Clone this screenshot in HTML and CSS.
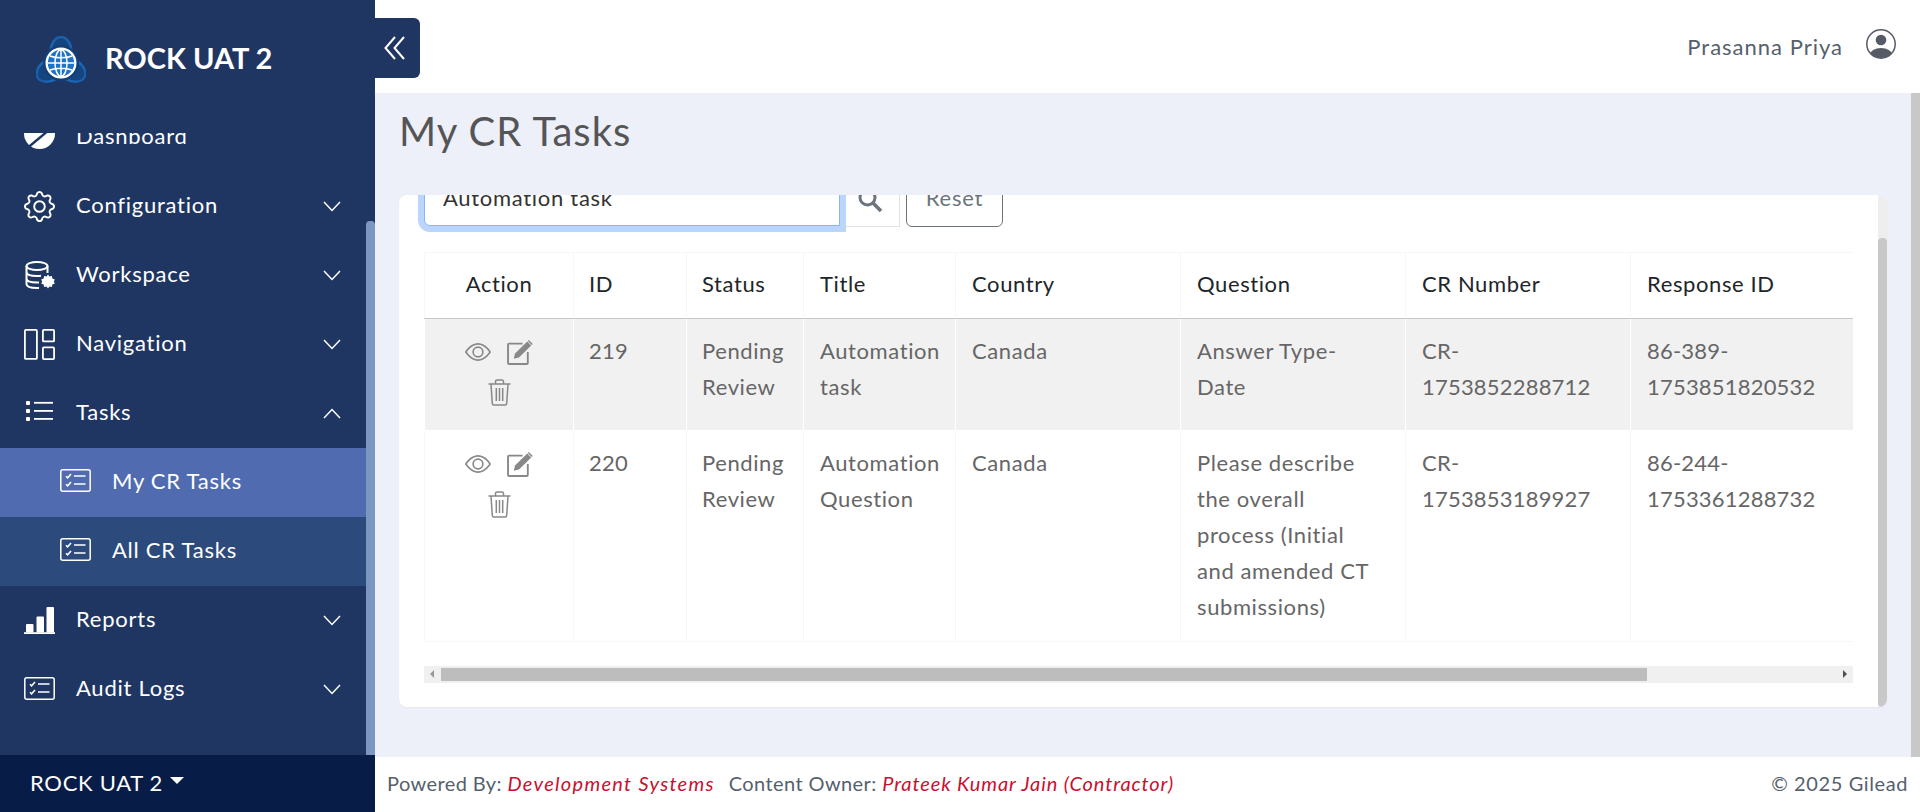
FILE: index.html
```html
<!DOCTYPE html>
<html lang="en">
<head>
<meta charset="utf-8">
<title>My CR Tasks</title>
<link rel="stylesheet" href="styles.css">
</head>
<body>
<svg class="defs" width="0" height="0" aria-hidden="true">
  <defs>
    <symbol id="i-chev-down" viewBox="0 0 18 11"><path d="M1 1l8 8.5L17 1" fill="none" stroke="currentColor" stroke-width="1.5"/></symbol>
    <symbol id="i-chev-up" viewBox="0 0 18 11"><path d="M1 10l8-8.5L17 10" fill="none" stroke="currentColor" stroke-width="1.5"/></symbol>
    <symbol id="i-tasklist" viewBox="0 0 31 23">
      <rect x=".8" y=".8" width="29.4" height="21.4" rx="2" fill="none" stroke="currentColor" stroke-width="1.5"/>
      <path d="M6 7.2l1.6 1.6L11 5M6 15.2l1.6 1.6L11 13" fill="none" stroke="currentColor" stroke-width="1.6"/>
      <path d="M14 7h11.5M14 15h11.5" fill="none" stroke="currentColor" stroke-width="1.7"/>
    </symbol>
    <symbol id="i-eye" viewBox="0 0 16 16"><path d="M16 8s-3-5.500-8-5.500S0 8 0 8s3 5.500 8 5.500S16 8 16 8zM1.173 8a13.133 13.133 0 0 1 1.660-2.043C4.120 4.668 5.880 3.500 8 3.500c2.120 0 3.879 1.168 5.168 2.457A13.133 13.133 0 0 1 14.828 8c-.058.087-.122.183-.195.288-.335.48-.83 1.120-1.465 1.755C11.879 11.332 10.119 12.500 8 12.500c-2.120 0-3.879-1.168-5.168-2.457A13.134 13.134 0 0 1 1.172 8z" fill="#888"/><path d="M8 5.500a2.500 2.500 0 1 0 0 5 2.500 2.500 0 0 0 0-5zM4.500 8a3.500 3.500 0 1 1 7 0 3.500 3.500 0 0 1-7 0z" fill="#888"/></symbol>
    <symbol id="i-edit" viewBox="0 0 25 24"><path d="M20 11.500V22a1 1 0 0 1-1 1H2a1 1 0 0 1-1-1V4.500a1 1 0 0 1 1-1h13" fill="none" stroke="#888" stroke-width="1.800"/><path d="M6.500 18l1.200-5L19.500 1.500l3.800 3.800L11.500 16.800z" fill="#888"/><path d="M21 0l3.800 3.800-1 1L20 1z" fill="#888"/></symbol>
    <symbol id="i-trash" viewBox="0 0 23 27"><g fill="none" stroke="#888" stroke-width="1.500"><path d="M.5 5h22M7.500 5V2.500A1.500 1.500 0 0 1 9 1h5a1.500 1.500 0 0 1 1.500 1.500V5M3 5l1.300 19.500a1.600 1.600 0 0 0 1.600 1.500h11.200a1.600 1.600 0 0 0 1.600-1.500L20 5M8.300 9v13M11.500 9v13M14.700 9v13"/></g></symbol>
  </defs>
</svg>
<aside class="sidebar">
  <div class="brand">
    <svg class="brand-logo" viewBox="0 0 50 48" aria-hidden="true">
      <defs>
        <linearGradient id="lg" x1="0" y1="0" x2="0" y2="1"><stop offset="0" stop-color="#1a5fa8"/><stop offset="1" stop-color="#1a78d4"/></linearGradient>
      </defs>
      <g fill="#14457f" stroke="url(#lg)" stroke-width="2.400">
        <ellipse cx="25" cy="16.500" rx="10.500" ry="15.500"/>
        <ellipse cx="25" cy="16.500" rx="10.500" ry="15.500" transform="rotate(120 25 28)"/>
        <ellipse cx="25" cy="16.500" rx="10.500" ry="15.500" transform="rotate(240 25 28)"/>
      </g>
      <circle cx="25" cy="27" r="18" fill="#123f78"/>
      <circle cx="25" cy="27" r="15.500" fill="#fff"/>
      <circle cx="25" cy="27" r="13.200" fill="#1f73c4"/>
      <g fill="none" stroke="#fff" stroke-width="1.500">
        <ellipse cx="25" cy="27" rx="6" ry="13.200"/>
        <path d="M25 13.800v26.400M11.800 27h26.400M14 20c6 2.400 16 2.400 22 0M14 34c6-2.400 16-2.400 22 0"/>
      </g>
    </svg>
    <span class="brand-name">ROCK UAT 2</span>
  </div>
  <div class="side-body">
    <nav class="side-nav">
      <a class="nav-row nav-first">
        <svg class="nav-icon nav-icon-dash" viewBox="0 0 31 31" aria-hidden="true"><circle cx="15.500" cy="15.500" r="15.500" fill="#fff"/><path d="M4 29.500L31 7" stroke="#1f3663" stroke-width="2.400"/></svg>
        <span class="nav-label">Dashboard</span>
      </a>
      <a class="nav-row">
        <svg class="nav-icon" viewBox="0 0 16 16" fill="#fff" aria-hidden="true"><path d="M8 4.754a3.246 3.246 0 1 0 0 6.492 3.246 3.246 0 0 0 0-6.492zM5.754 8a2.246 2.246 0 1 1 4.492 0 2.246 2.246 0 0 1-4.492 0z"/><path d="M9.796 1.343c-.527-1.79-3.065-1.79-3.592 0l-.094.319a.873.873 0 0 1-1.255.52l-.292-.16c-1.64-.892-3.433.902-2.54 2.541l.159.292a.873.873 0 0 1-.52 1.255l-.319.094c-1.79.527-1.79 3.065 0 3.592l.319.094a.873.873 0 0 1 .52 1.255l-.16.292c-.892 1.64.901 3.434 2.541 2.54l.292-.159a.873.873 0 0 1 1.255.52l.094.319c.527 1.79 3.065 1.79 3.592 0l.094-.319a.873.873 0 0 1 1.255-.52l.292.16c1.64.893 3.434-.902 2.54-2.541l-.159-.292a.873.873 0 0 1 .52-1.255l.319-.094c1.79-.527 1.79-3.065 0-3.592l-.319-.094a.873.873 0 0 1-.52-1.255l.16-.292c.893-1.64-.902-3.433-2.541-2.54l-.292.159a.873.873 0 0 1-1.255-.52l-.094-.319zm-2.633.283c.246-.835 1.428-.835 1.674 0l.094.319a1.873 1.873 0 0 0 2.693 1.115l.291-.16c.764-.415 1.6.42 1.184 1.185l-.159.292a1.873 1.873 0 0 0 1.116 2.692l.318.094c.835.246.835 1.428 0 1.674l-.319.094a1.873 1.873 0 0 0-1.115 2.693l.16.291c.415.764-.42 1.6-1.185 1.184l-.291-.159a1.873 1.873 0 0 0-2.693 1.116l-.094.318c-.246.835-1.428.835-1.674 0l-.094-.319a1.873 1.873 0 0 0-2.692-1.115l-.292.16c-.764.415-1.6-.42-1.184-1.185l.159-.291A1.873 1.873 0 0 0 1.945 8.93l-.319-.094c-.835-.246-.835-1.428 0-1.674l.319-.094A1.873 1.873 0 0 0 3.06 4.377l-.16-.292c-.415-.764.42-1.6 1.185-1.184l.292.159a1.873 1.873 0 0 0 2.692-1.115l.094-.319z"/></svg>
        <span class="nav-label">Configuration</span>
        <svg class="chev"><use href="#i-chev-down"/></svg>
      </a>
      <a class="nav-row">
        <svg class="nav-icon" viewBox="0 0 31 29" aria-hidden="true"><g fill="none" stroke="#fff" stroke-width="2"><ellipse cx="13" cy="5" rx="10.500" ry="4"/><path d="M2.500 5v18c0 2.500 4.500 4 10.500 4h2M23.500 5v7M2.500 11c0 2.500 4.500 4 10.500 4 1.500 0 3-.1 4-.3M2.500 17.500c0 2.500 4.500 4 10.500 4h2"/></g><path d="M24 13.500l1.400 2.100 2.400-.6.600 2.400 2.400 1-1 2.100 1 2.100-2.400 1-.6 2.400-2.400-.6-1.400 2-1.400-2-2.400.6-.6-2.400-2.400-1 1-2.100-1-2.100 2.400-1 .6-2.400 2.400.6z" fill="#fff"/></svg>
        <span class="nav-label">Workspace</span>
        <svg class="chev"><use href="#i-chev-down"/></svg>
      </a>
      <a class="nav-row">
        <svg class="nav-icon" viewBox="0 0 31 31" aria-hidden="true"><g fill="none" stroke="#fff" stroke-width="1.800"><rect x=".9" y=".9" width="12" height="29" rx="1"/><rect x="18.900" y=".9" width="11.200" height="11.500" rx="1"/><rect x="18.900" y="18.400" width="11.200" height="11.700" rx="1"/></g></svg>
        <span class="nav-label">Navigation</span>
        <svg class="chev"><use href="#i-chev-down"/></svg>
      </a>
      <a class="nav-row">
        <svg class="nav-icon nav-icon-list" viewBox="0 0 27 20" aria-hidden="true"><g fill="#fff"><rect x="0" y="0" width="4" height="4" rx="1"/><rect x="0" y="8" width="4" height="4" rx="1"/><rect x="0" y="16" width="4" height="4" rx="1"/><rect x="8" y=".9" width="19" height="1.800"/><rect x="8" y="9" width="19" height="1.800"/><rect x="8" y="17" width="19" height="1.800"/></g></svg>
        <span class="nav-label">Tasks</span>
        <svg class="chev"><use href="#i-chev-up"/></svg>
      </a>
      <a class="nav-row nav-sub nav-current">
        <svg class="nav-icon nav-icon-task"><use href="#i-tasklist"/></svg>
        <span class="nav-label">My CR Tasks</span>
      </a>
      <a class="nav-row nav-sub">
        <svg class="nav-icon nav-icon-task"><use href="#i-tasklist"/></svg>
        <span class="nav-label">All CR Tasks</span>
      </a>
      <a class="nav-row">
        <svg class="nav-icon" viewBox="0 0 31 27" aria-hidden="true"><g fill="#fff"><rect x="2" y="17" width="7.500" height="8.500" rx="1"/><rect x="12.500" y="9.500" width="7.500" height="16" rx="1"/><rect x="22.500" y="0" width="7.500" height="25.500" rx="1"/><rect x="0" y="25.200" width="31" height="1.800"/></g></svg>
        <span class="nav-label">Reports</span>
        <svg class="chev"><use href="#i-chev-down"/></svg>
      </a>
      <a class="nav-row">
        <svg class="nav-icon nav-icon-audit"><use href="#i-tasklist"/></svg>
        <span class="nav-label">Audit Logs</span>
        <svg class="chev"><use href="#i-chev-down"/></svg>
      </a>
    </nav>
    <div class="side-scroll"><div class="side-thumb"></div></div>
  </div>
  <div class="side-foot">
    <span>ROCK UAT 2</span><span class="caret"></span>
  </div>
  <button class="collapse" aria-label="Collapse">
    <svg viewBox="0 0 21 24" width="21" height="24" aria-hidden="true"><path d="M11 1L1.500 12 11 23M20 1l-9.500 11L20 23" fill="none" stroke="#fff" stroke-width="2"/></svg>
  </button>
</aside>
<div class="main">
  <header class="topbar">
    <span class="user-name">Prasanna Priya</span>
    <svg class="user-icon" viewBox="0 0 30 30" aria-hidden="true">
      <defs><clipPath id="uc"><circle cx="15" cy="15" r="14"/></clipPath></defs>
      <circle cx="15" cy="15" r="14.200" fill="none" stroke="#555a66" stroke-width="1.500"/>
      <circle cx="15" cy="11" r="5.300" fill="#555a66"/>
      <ellipse cx="15" cy="25.500" rx="11" ry="6.500" fill="#555a66" clip-path="url(#uc)"/>
    </svg>
  </header>
  <div class="content-wrap">
    <main class="content">
      <h1 class="page-title">My CR Tasks</h1>
      <section class="card">
        <div class="card-body">
          <form class="filter">
            <input class="filter-input" type="text" value="Automation task">
            <button class="filter-search" type="button" aria-label="Search">
              <svg viewBox="0 0 26 26" width="26" height="26" aria-hidden="true"><circle cx="10.500" cy="10.500" r="7.500" fill="none" stroke="#6c757d" stroke-width="3"/><path d="M16 16l8 8" stroke="#6c757d" stroke-width="3.600"/></svg>
            </button>
            <button class="filter-reset" type="button">Reset</button>
          </form>
          <div class="table-clip">
            <table class="tasks">
              <thead>
                <tr>
                  <th class="c-action">Action</th><th class="c-id">ID</th><th class="c-status">Status</th><th class="c-title">Title</th><th class="c-country">Country</th><th class="c-question">Question</th><th class="c-cr">CR Number</th><th class="c-resp">Response ID</th>
                </tr>
              </thead>
              <tbody>
                <tr class="row-shade">
                  <td class="cell-action">
                    <div class="actions">
                      <svg class="a-eye"><use href="#i-eye"/></svg>
                      <svg class="a-edit"><use href="#i-edit"/></svg>
                      <svg class="a-trash"><use href="#i-trash"/></svg>
                    </div>
                  </td>
                  <td class="cell-num">219</td><td>Pending Review</td><td>Automation task</td><td>Canada</td><td class="cell-q">Answer Type-Date</td><td class="cell-num">CR-1753852288712</td><td class="cell-num">86-389-1753851820532</td>
                </tr>
                <tr>
                  <td class="cell-action">
                    <div class="actions">
                      <svg class="a-eye"><use href="#i-eye"/></svg>
                      <svg class="a-edit"><use href="#i-edit"/></svg>
                      <svg class="a-trash"><use href="#i-trash"/></svg>
                    </div>
                  </td>
                  <td class="cell-num">220</td><td>Pending Review</td><td>Automation Question</td><td>Canada</td><td class="cell-q">Please describe the overall process (Initial and amended CT submissions)</td><td class="cell-num">CR-1753853189927</td><td class="cell-num">86-244-1753361288732</td>
                </tr>
              </tbody>
            </table>
          </div>
          <div class="hscroll">
            <span class="arrow-left"></span>
            <div class="hthumb"></div>
            <span class="arrow-right"></span>
          </div>
        </div>
        <div class="card-scroll"><div class="card-thumb"></div></div>
      </section>
    </main>
    <div class="page-scroll"></div>
  </div>
  <footer class="footer">
    <span>Powered By: <em class="foot-dev">Development Systems</em><span class="foot-gap"></span>Content Owner: <em class="foot-owner">Prateek Kumar Jain (Contractor)</em></span>
    <span class="foot-copy">© 2025 Gilead</span>
  </footer>
</div>
</body>
</html>
```
FILE: styles.css
```css
* { box-sizing: border-box; }
html, body { margin: 0; height: 100%; }
body {
  display: flex;
  height: 812px;
  overflow: hidden;
  font-family: "Lato", "Open Sans", sans-serif;
  color: #555;
  background: #fff;
}
.defs { position: absolute; }

/* sidebar */
.sidebar {
  position: relative;
  width: 375px;
  flex: none;
  display: flex;
  flex-direction: column;
  background: #1f3663;
  color: #fff;
}
.brand {
  height: 133px;
  flex: none;
  display: flex;
  align-items: flex-start;
  padding: 36px 0 0 36px;
  gap: 21px;
}
.brand-logo { width: 50px; height: 48px; flex: none; }
.brand-name { font-size: 29px; font-weight: 700; line-height: 44px; margin-left: -2px; }
.side-body { flex: 1; min-height: 0; display: flex; }
.side-nav { flex: 1; overflow: hidden; font-size: 22px; letter-spacing: .75px; }
.nav-row {
  height: 69px;
  display: flex;
  align-items: center;
  padding: 0 25px 0 24px;
}
.nav-first { margin-top: -30px; }
.nav-icon { width: 31px; height: 31px; flex: none; margin-right: 21px; }
.nav-icon-dash { margin-bottom: 8px; }
.nav-icon-list { width: 27px; height: 20px; margin: -6px 23px 0 2px; }
.nav-icon-audit { width: 31px; height: 23px; margin-top: -2px; }
.nav-label { flex: 1; margin-top: -4px; }
.chev { width: 18px; height: 11px; flex: none; color: #fff; }
.nav-sub { padding-left: 60px; background: #2d4a7c; }
.nav-current { background: #506bb0; }
.nav-icon-task { width: 31px; height: 23px; margin-top: -4px; }
.side-scroll { width: 9px; flex: none; padding-top: 88px; display: flex; }
.side-thumb { flex: 1; background: #7b97c0; border-radius: 4px 4px 0 0; }
.side-foot {
  height: 57px;
  flex: none;
  background: #081c48;
  display: flex;
  align-items: center;
  padding: 0 0 2px 30px;
  font-size: 22px;
  letter-spacing: .7px;
}
.caret {
  width: 0; height: 0;
  margin: -4px 0 0 7px;
  border-left: 7px solid transparent;
  border-right: 7px solid transparent;
  border-top: 7px solid #fff;
}
.collapse {
  position: absolute;
  left: 375px;
  top: 18px;
  width: 45px;
  height: 60px;
  padding: 0 7px 0 0;
  border: 0;
  border-radius: 0 6px 6px 0;
  background: #1f3663;
  display: flex;
  align-items: center;
  justify-content: center;
}

/* main */
.main { flex: 1; min-width: 0; display: flex; flex-direction: column; }
.topbar {
  height: 93px;
  flex: none;
  display: flex;
  align-items: flex-start;
  justify-content: flex-end;
  padding: 29px 24px 0 0;
  background: #fff;
}
.user-name { font-size: 22px; line-height: 36px; letter-spacing: 1px; color: #555f6d; margin-right: 23px; }
.user-icon { width: 30px; height: 30px; }
.content-wrap { flex: 1; min-height: 0; display: flex; background: #edf0f9; }
.content { flex: 1; min-width: 0; padding: 0 24px 0 24px; }
.page-title {
  margin: 0;
  height: 102px;
  padding-top: 14px;
  font-size: 40px;
  line-height: 48px;
  letter-spacing: 1px;
  font-weight: 400;
  color: #555;
}
.page-scroll { width: 9px; flex: none; background: #c8c8c8; }
.card {
  height: 512px;
  display: flex;
  background: #fff;
  border-radius: 8px;
  overflow: hidden;
  box-shadow: 0 1px 2px rgba(0,0,0,.04);
}
.card-body { flex: 1; min-width: 0; padding: 0 25px; }
.card-scroll { width: 9px; flex: none; background: #eee; padding-top: 43px; display: flex; }
.card-thumb { flex: 1; background: #c8c8c8; border-radius: 4px; }
.filter { display: flex; margin-top: -22px; height: 54px; margin-bottom: 25px; }
.filter-input {
  width: 416px;
  height: 53px;
  padding: 0 18px 5px;
  border: 1px solid #86b7fe;
  border-radius: 6px 0 0 6px;
  box-shadow: 0 0 0 6px #bcd6fb;
  font: 22px "Lato", sans-serif;
  letter-spacing: .7px;
  color: #333;
  background: #fff;
  position: relative;
  z-index: 1;
}
.filter-search {
  width: 60px;
  height: 54px;
  padding: 0;
  background: #fff;
  border: 1px solid #e2e2e2;
  border-left: 0;
  display: flex;
  align-items: center;
  justify-content: center;
}
.filter-reset {
  width: 97px;
  height: 54px;
  margin-left: 6px;
  padding: 0 0 5px;
  border: 1px solid #6c757d;
  border-radius: 6px;
  background: #fff;
  font: 22px "Lato", sans-serif;
  letter-spacing: .8px;
  color: #6c757d;
}

/* table */
.table-clip { overflow: hidden; }
.tasks {
  table-layout: fixed;
  border-collapse: collapse;
  width: 1429px;
  font-size: 22px;
  line-height: 36px;
  letter-spacing: .6px;
  color: #666;
}
.tasks th {
  height: 66px;
  padding: 0 15px 4px;
  text-align: left;
  font-weight: 400;
  color: #212529;
  border: 1px solid #f7f7f7;
  border-bottom: 1px solid #c8c8c8;
}
.tasks td {
  padding: 14px 15px 16px;
  vertical-align: top;
  border: 1px solid #f7f7f7;
}
.tasks th:nth-child(n+4), .tasks td:nth-child(n+4) { padding-left: 16px; }
.tasks .cell-q { padding-right: 30px; }
.tasks .cell-num { letter-spacing: .2px; }
.tasks .c-action { width: 149px; text-align: center; }
.c-id { width: 113px; }
.c-status { width: 117px; }
.c-title { width: 152px; }
.c-country, .c-question, .c-cr { width: 225px; }
.c-resp { width: 223px; }
.row-shade td { background: #f1f1f1; border-color: #fff; border-top: 0; }
.tasks .cell-action { padding: 0; height: 112px; }
.actions {
  display: flex;
  flex-wrap: wrap;
  justify-content: center;
  align-items: center;
  padding-top: 20px;
}
.a-eye { width: 26px; height: 26px; margin-right: 16px; }
.a-edit { width: 26px; height: 25px; }
.a-trash { width: 23px; height: 27px; margin: 14px 60px 0; }

/* horizontal scrollbar */
.hscroll {
  height: 17px;
  margin-top: 24px;
  display: flex;
  align-items: center;
  background: #f0f0f0;
  position: relative;
}
.hthumb { width: 1206px; height: 13px; margin-left: 17px; background: #bdbdbd; }
.arrow-left, .arrow-right { position: absolute; top: 4px; width: 0; height: 0; border-top: 4px solid transparent; border-bottom: 4px solid transparent; }
.arrow-left { left: 6px; border-right: 4px solid #999; }
.arrow-right { right: 6px; border-left: 4px solid #505050; }

/* footer */
.footer {
  height: 55px;
  flex: none;
  display: flex;
  align-items: center;
  justify-content: space-between;
  padding: 0 12px 4px 12px;
  font-size: 20px;
  letter-spacing: .4px;
  color: #555f6d;
  background: #fff;
}
.footer em { color: #c8102e; font-style: italic; }
.footer .foot-dev { letter-spacing: 1.3px; }
.footer .foot-owner { letter-spacing: .9px; }
.foot-copy { letter-spacing: .6px; }
.foot-gap { display: inline-block; width: 14px; }
```
